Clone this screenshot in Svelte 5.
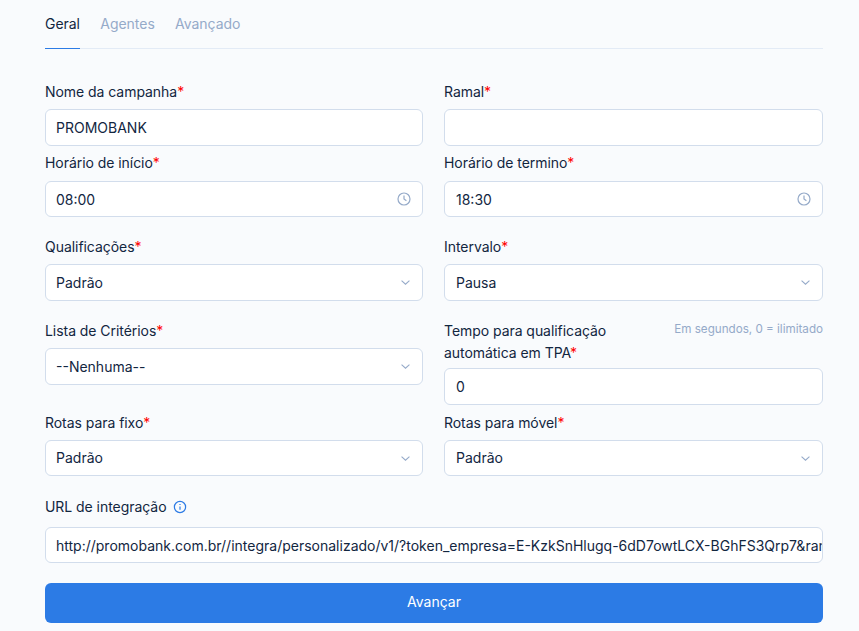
<script>
  const tabs = ['Geral', 'Agentes', 'Avançado'];
  const url = 'http://promobank.com.br//integra/personalizado/v1/?token_empresa=E-KzkSnHlugq-6dD7owtLCX-BGhFS3Qrp7&ramal=';
</script>

{#snippet req(text)}
  <label class="lbl">{text}<span class="star">*</span></label>
{/snippet}

{#snippet timeField(text, value)}
  <div class="field time">
    {@render req(text)}
    <div class="wrap">
      <input class="ctl short" type="text" {value} />
      <svg class="clock" viewBox="0 0 14 14" fill="none" stroke="currentColor" stroke-width="1.2">
        <circle cx="7" cy="7" r="6" />
        <path d="M7 3.4V7l2.4 1.8" />
      </svg>
    </div>
  </div>
{/snippet}

{#snippet selectField(text, value, short = false)}
  <div class="field">
    {@render req(text)}
    <div class="wrap">
      <div class="ctl sel" class:short>{value}</div>
      <svg class="chev" viewBox="0 0 12 8" fill="none" stroke="currentColor" stroke-width="1.2">
        <path d="M1.5 1.8 6 6l4.5-4.2" />
      </svg>
    </div>
  </div>
{/snippet}

<div class="page">
  <nav class="tabs">
    {#each tabs as tab, i}
      <span class="tab" class:active={i === 0}>{tab}</span>
    {/each}
  </nav>

  <form class="form">
    <div class="row tight">
      <div class="field">
        {@render req('Nome da campanha')}
        <input class="ctl" type="text" value="PROMOBANK" />
      </div>
      <div class="field">
        {@render req('Ramal')}
        <input class="ctl" type="text" value="" />
      </div>
    </div>

    <div class="row">
      {@render timeField('Horário de início', '08:00')}
      {@render timeField('Horário de termino', '18:30')}
    </div>

    <div class="row">
      {@render selectField('Qualificações', 'Padrão')}
      {@render selectField('Intervalo', 'Pausa')}
    </div>

    <div class="row tight next-up">
      {@render selectField('Lista de Critérios', '--Nenhuma--')}
      <div class="field">
        <div class="lbl-line">
          <label class="lbl two">Tempo para qualificação automática em TPA<span class="star">*</span></label>
          <small class="hint">Em segundos, 0 = ilimitado</small>
        </div>
        <input class="ctl" type="text" value="0" />
      </div>
    </div>

    <div class="row last">
      {@render selectField('Rotas para fixo', 'Padrão', true)}
      {@render selectField('Rotas para móvel', 'Padrão', true)}
    </div>

    <div class="url-field">
      <label class="lbl url-lbl">
        URL de integração
        <svg class="info" viewBox="0 0 14 14" fill="none" stroke="currentColor" stroke-width="1.2">
          <circle cx="7" cy="7" r="5.6" />
          <path d="M7 6.4v3.4M7 4.1v.9" />
        </svg>
      </label>
      <input class="ctl url short" type="text" value={url} />
    </div>

    <button class="next" type="button">Avançar</button>
  </form>
</div>

<style>
  :global(body) {
    background: #f9fbfd;
  }

  .page {
    padding: 0 36px 0 45px;
    font-family: Inter, "Liberation Sans", sans-serif;
    font-size: 14px;
    color: #12263f;
  }

  .tabs {
    display: flex;
    gap: 20.3px;
    height: 49px;
    border-bottom: 1px solid #e3ebf6;
    box-sizing: border-box;
  }
  .tab {
    padding-top: 14px;
    line-height: 20px;
    color: #95aac9;
    box-sizing: border-box;
    height: 49px;
    letter-spacing: -0.03px;
  }
  .tab.active {
    color: #12263f;
    border-bottom: 1px solid #2c7be5;
  }

  .form {
    padding-top: 32px;
  }

  .row {
    display: grid;
    grid-template-columns: 378px 379px;
    gap: 21px;
    margin-bottom: 19px;
  }
  .row.tight {
    margin-bottom: 6px;
  }
  .row.next-up {
    margin-bottom: 7px;
  }
  .row.last {
    margin-bottom: 20px;
  }

  .field {
    display: flex;
    flex-direction: column;
  }
  .field:nth-child(2) .ctl {
    padding-left: 11px;
  }

  .lbl {
    display: block;
    line-height: 21px;
    margin-bottom: 7px;
    letter-spacing: -0.05px;
  }
  .time .lbl {
    margin-bottom: 8px;
  }
  .star {
    color: #f00;
  }

  .lbl-line {
    display: flex;
    justify-content: space-between;
    align-items: flex-start;
    margin-bottom: 4px;
  }
  .lbl.two {
    width: 200px;
    margin-bottom: 0;
    line-height: 22px;
  }
  .hint {
    font-size: 11.65px;
    line-height: 18px;
    color: #95aac9;
  }

  .wrap {
    position: relative;
  }

  .ctl {
    display: block;
    width: 100%;
    height: 37px;
    box-sizing: border-box;
    padding: 0 10px;
    border: 1px solid #d2ddec;
    border-radius: 6px;
    background: #fff;
    color: #12263f;
    font: inherit;
    line-height: 35px;
    outline: none;
  }
  .short {
    height: 36px;
    line-height: 34px;
  }
  .url {
    padding-right: 0;
  }

  .clock {
    position: absolute;
    right: 12px;
    top: 11px;
    width: 14px;
    height: 14px;
    color: #95aac9;
  }
  .chev {
    position: absolute;
    right: 12px;
    top: 15px;
    width: 11px;
    height: 7px;
    color: #95aac9;
  }

  .url-lbl {
    display: flex;
    align-items: center;
    gap: 7px;
    margin-bottom: 10px;
  }
  .info {
    width: 14px;
    height: 14px;
    color: #2c7be5;
  }

  .next {
    display: block;
    width: 100%;
    height: 40px;
    margin-top: 20px;
    padding: 0 0 4px;
    border: none;
    border-radius: 6px;
    background: #2c7be5;
    color: #fff;
    font: inherit;
  }
</style>
